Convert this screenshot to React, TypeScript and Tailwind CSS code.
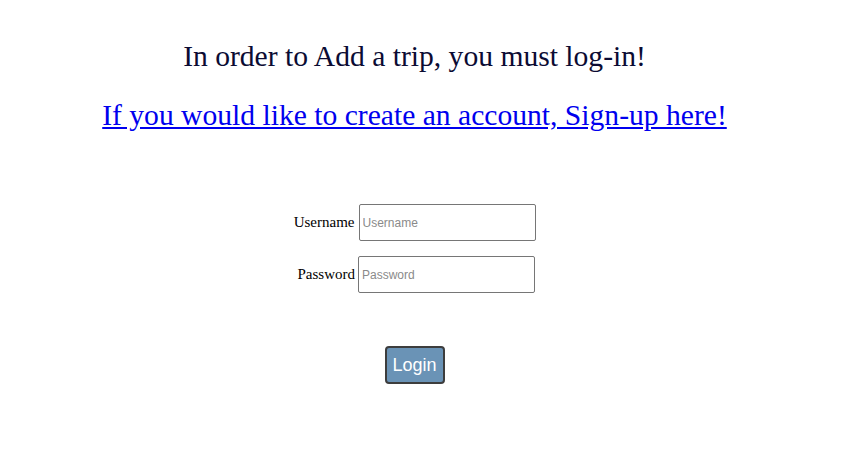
import React from 'react'

const App: React.FC = () => {
  return (
    <div className="w-[829px] min-h-[466px] bg-white font-['Liberation_Serif',serif] text-black">
      {/* Heading */}
      <div className="pt-[38px] text-center">
        <h1 className="text-[29.6px] leading-[36px] text-[#0b0b33]">
          In order to Add a trip, you must log-in!
        </h1>
        <a href="#" className="mt-[23px] inline-block text-[29.6px] leading-[36px] text-[#0000ee] underline">
          If you would like to create an account, Sign-up here!
        </a>
      </div>

      {/* Form */}
      <form className="mt-[71px] flex flex-col items-center">
        <div className="flex items-center gap-[4px]">
          <label className="w-[61px] text-right text-[15px] whitespace-nowrap">Username</label>
          <input
            placeholder="Username"
            className="h-[37px] w-[177px] rounded-[2px] border border-[#767676] px-[3px] font-['Liberation_Sans',sans-serif] text-[12px] placeholder:text-[#8a8a8a]"
          />
        </div>
        <div className="mt-[15px] flex items-center gap-[3px]">
          <label className="w-[61px] text-right text-[15px] whitespace-nowrap">Password</label>
          <input
            type="password"
            placeholder="Password"
            className="h-[37px] w-[177px] rounded-[2px] border border-[#767676] px-[3px] font-['Liberation_Sans',sans-serif] text-[12px] placeholder:text-[#8a8a8a]"
          />
        </div>
        <button
          type="button"
          className="mt-[53px] h-[38px] w-[60px] rounded-[4px] border-2 border-[#3d3d3d] bg-[#6a93b6] font-['Liberation_Sans',sans-serif] text-[18px] text-white"
        >
          Login
        </button>
      </form>
    </div>
  )
}

export default App
